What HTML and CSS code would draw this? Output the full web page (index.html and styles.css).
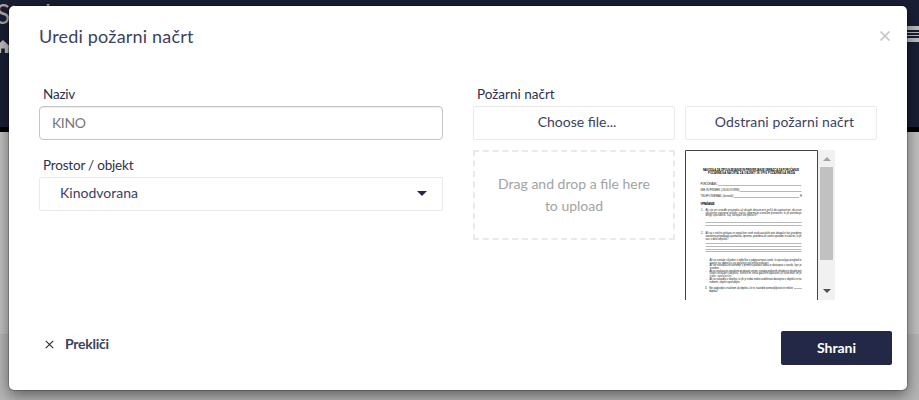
FILE: index.html
```
<!DOCTYPE html>
<html lang="sl">
<head>
<meta charset="utf-8">
<title>Uredi požarni načrt</title>
<link rel="stylesheet" href="styles.css">
</head>
<body>
<div class="page">
  <div class="page-title">Stavbe</div>
  <svg class="home" viewBox="0 0 16 14"><path d="M8 0 16 7.5H13.7V13H9.8V8.5H6.2V13H2.3V7.5H0Z"/></svg>
  <div class="menu"><i></i><i></i><i></i></div>
</div>
<main class="modal">
  <header class="head">
    <h1>Uredi požarni načrt</h1>
    <button class="close" aria-label="Zapri"><svg viewBox="0 0 10 10"><path d="M.5.5 9.500 9.500M9.500.5.5 9.500"/></svg></button>
  </header>
  <div class="body">
    <section class="left">
      <label>Naziv</label>
      <div class="input">KINO</div>
      <label class="second">Prostor / objekt</label>
      <div class="select"><span>Kinodvorana</span><i class="caret"></i></div>
    </section>
    <section class="right">
      <label class="plan-label">Požarni načrt</label>
      <div class="files">
        <div class="button">Choose file...</div>
        <div class="button remove">Odstrani požarni načrt</div>
        <div class="drop"><span>Drag and drop a file here</span><span>to upload</span></div>
        <div class="preview">
          <svg class="doc" viewBox="0 0 133 150">
            <path class="edge" d="M.5 150V.5H132.500V150"/>
            <g class="strong">
              <text x="18" y="21.200" textLength="96">NAVODILA ZA IZPOLNJEVANJE IN PREVERJANJE OBRAZCA ZA POROČANJE</text>
              <text x="23" y="24.400" textLength="87">POŽARNEGA NAČRTA ZA OBJEKT IN VPIS POŽARNEGA REDA</text>
              <text x="15.500" y="55.200" textLength="14">VPRAŠANJE</text>
            </g>
            <g>
              <text x="15.500" y="35.400" textLength="17">POROČEVALEC</text>
              <text x="15.500" y="41.400" textLength="39">IME IN PRIIMEK (ODGOVORNI)</text>
              <text x="15.500" y="47.400" textLength="33">TELEFON/EMAIL (kontakt)</text>
              <text x="115" y="47.400">H</text>
              <text x="16" y="61.200">1.</text>
              <text x="20.500" y="61.200" textLength="96">Ali ste pri izvedbi postopka ali drugih dejavnosti prišli do ugotovitve, da niso</text>
              <text x="20.500" y="63.800" textLength="96">vključene ustrezne rešitve, načrti, oprema in označbe prostorov, ki jih potrebuje</text>
              <text x="20.500" y="66.400" textLength="52">drugi uporabnik, kaj ukrepati ob požaru?</text>
              <text x="16" y="84.200">2.</text>
              <text x="20.500" y="84.200" textLength="96">Ali so v načrtu prikaza in označitve vseh evakuacijskih poti drugače kot izvedeno</text>
              <text x="20.500" y="87.200" textLength="96">označena pripadajoča pomočila, oprema, potrebna za varno uporabo in zaščito, ki jih</text>
              <text x="20.500" y="90.200" textLength="23">vas v delu objekta?</text>
              <text x="20.500" y="110.700">-</text>
              <text x="24.500" y="110.700" textLength="92">Ali so oznake skladne z odločbo o odgovornosti oseb, ki opravljajo pregled in</text>
              <text x="24.500" y="113.500" textLength="59">stanje na območju za gašenje začetnih požarov</text>
              <text x="20.500" y="115.900">-</text>
              <text x="24.500" y="115.900" textLength="92">Ali so navodila za ravnanje v primeru požara vidna in dostopna v stavbi, kjer je</text>
              <text x="24.500" y="118.500" textLength="10">izveden.</text>
              <text x="20.500" y="121.600">-</text>
              <text x="24.500" y="121.600" textLength="92">Ali so evakuacije označene in dostop urejen, oznake požarnih izhodov in drugih poti</text>
              <text x="24.500" y="124.400" textLength="92">kateri izvajajo v objektu. Število in vrsta gasilnih aparatov je ustrezna, če je</text>
              <text x="24.500" y="126.900" textLength="23">vidni opozorilni.</text>
              <text x="20.500" y="129.700">-</text>
              <text x="24.500" y="129.700" textLength="92">Ali so navodila v objektu, ki jih je treba redno vzdrževati dostopna v objektu in na</text>
              <text x="24.500" y="132.500" textLength="31">vidnem, objekt uporabljen.</text>
              <text x="20" y="138.700">3.</text>
              <text x="24" y="138.700" textLength="84">Ste zadovoljni z načrtom ali objektu, če ni, navedite pomanjkljivosti in rešitve</text>
              <text x="24" y="141.700" textLength="9">objekta?</text>
            </g>
            <path class="rule" d="M33 35.500H116.500M55 41.500H116.500M49 47.500H114M20.500 72.500H116.500M20.500 75.500H116.500M20.500 93.500H116.500M20.500 96.500H116.500M20.500 99.500H116.500M20.500 101.500H116.500M109 138.500H117"/>
          </svg>
          <div class="scroll"><i class="up"></i><i class="thumb"></i><i class="down"></i></div>
        </div>
      </div>
    </section>
  </div>
  <footer class="foot">
    <button class="cancel"><svg viewBox="0 0 8 8"><path d="M.7.7 7.300 7.300M7.300.7.7 7.300"/></svg>Prekliči</button>
    <button class="save">Shrani</button>
  </footer>
</main>
</body>
</html>
```
FILE: styles.css
```
* { box-sizing: border-box; }
body {
  margin: 0;
  width: 919px;
  height: 400px;
  overflow: hidden;
  padding: 6px 12px 10px 9px;
  font: 14px/20px Lato, "Open Sans", sans-serif;
  color: #3c4160;
}
h1 { margin: 0; font-size: 18px; font-weight: 400; line-height: 24px; letter-spacing: .19px; }
button { border: 0; padding: 0; background: none; font: inherit; color: inherit; }

/* Dimmed page behind the dialog */
.page {
  position: absolute;
  inset: 0;
  overflow: hidden;
  background: linear-gradient(#191e34 0 127px, #000 127px 132px, #c0c0c0 132px 334px, #b5b5b5 334px);
}
.page-title { position: absolute; left: -4px; top: 0; font-size: 26px; line-height: 29px; font-weight: 400; color: #a8a8a8; }
.home { position: absolute; left: -5px; top: 40px; width: 16px; height: 14px; fill: #bfbfbf; }
.menu {
  position: absolute;
  left: 905px;
  top: 26px;
  width: 20px;
  height: 16px;
  padding-top: 4px;
  background: #bfbfbf;
}
.menu i { display: block; height: 2px; margin-bottom: 1px; background: #191e34; }

.modal {
  position: relative;
  width: 898px;
  height: 384px;
  background: #fff;
  border-radius: 5px;
  box-shadow: 0 0 0 1px rgba(0, 0, 0, .2), 0 5px 15px rgba(0, 0, 0, .5);
}
.head { display: flex; justify-content: space-between; height: 78px; padding: 18px 17px 0 30px; }
.close { width: 10px; height: 10px; margin-top: 7px; line-height: 0; }
.close svg { width: 10px; height: 10px; stroke: #c8c8c8; stroke-width: 1.7; }
.body { display: flex; gap: 30px; height: 247px; padding: 0 30px; }
.left { width: 404px; }
.right { width: 404px; }
label { display: block; height: 22px; padding-left: 4px; font-size: 13.5px; line-height: 20px; letter-spacing: -.2px; color: #2c3150; }
.plan-label { letter-spacing: 0; }
.second { margin-top: 15px; }
.input, .select, .button { display: flex; align-items: center; height: 34px; border: 1px solid #eaeaea; border-radius: 2px; }
.input { padding-left: 12px; border-color: #c5c5c5; border-radius: 4px; box-shadow: inset 0 1px 1px rgba(0, 0, 0, .075); color: #777; letter-spacing: -.4px; }
.select { justify-content: space-between; padding: 0 15px 2px 20px; }
.caret { border: 5px solid transparent; border-top-color: #222845; border-bottom: 0; }
.files { display: grid; grid-template-columns: 202px 192px; gap: 10px; align-items: start; }
.button { justify-content: center; padding-bottom: 2px; padding-left: 6px; }
.remove { padding-left: 7px; letter-spacing: .1px; }
.drop {
  display: flex;
  flex-direction: column;
  align-items: center;
  justify-content: center;
  height: 90px;
  border: 2px dashed #eaeaea;
  line-height: 22px;
  color: #a3a3a3;
}
.preview { display: flex; width: 150px; height: 150px; }
.doc { width: 133px; height: 150px; font: 2.7px "Liberation Sans", sans-serif; fill: #222; }
.strong { font-weight: 700; fill: #000; }
.edge { fill: none; stroke: #444; }
.rule { fill: none; stroke: #888; stroke-width: .6; }
.scroll { display: flex; flex-direction: column; align-items: center; width: 17px; padding: 7px 0; background: #f1f1f1; }
.up { border: 4px solid transparent; border-bottom-color: #a3a3a3; border-top: 0; }
.thumb { width: 13px; height: 93px; margin-top: 6px; background: #c1c1c1; }
.down { margin-top: auto; border: 4px solid transparent; border-top-color: #505050; border-bottom: 0; }
.foot { display: flex; justify-content: space-between; align-items: flex-start; padding: 0 15px 0 36px; }
.cancel { display: flex; align-items: center; gap: 11px; height: 26px; font-weight: 700; letter-spacing: -.25px; }
.cancel svg { width: 9px; height: 9px; stroke: #222; stroke-width: .9; }
.save { width: 111px; height: 34px; background: #222845; border-radius: 2px; color: #fff; font-weight: 700; }
```
